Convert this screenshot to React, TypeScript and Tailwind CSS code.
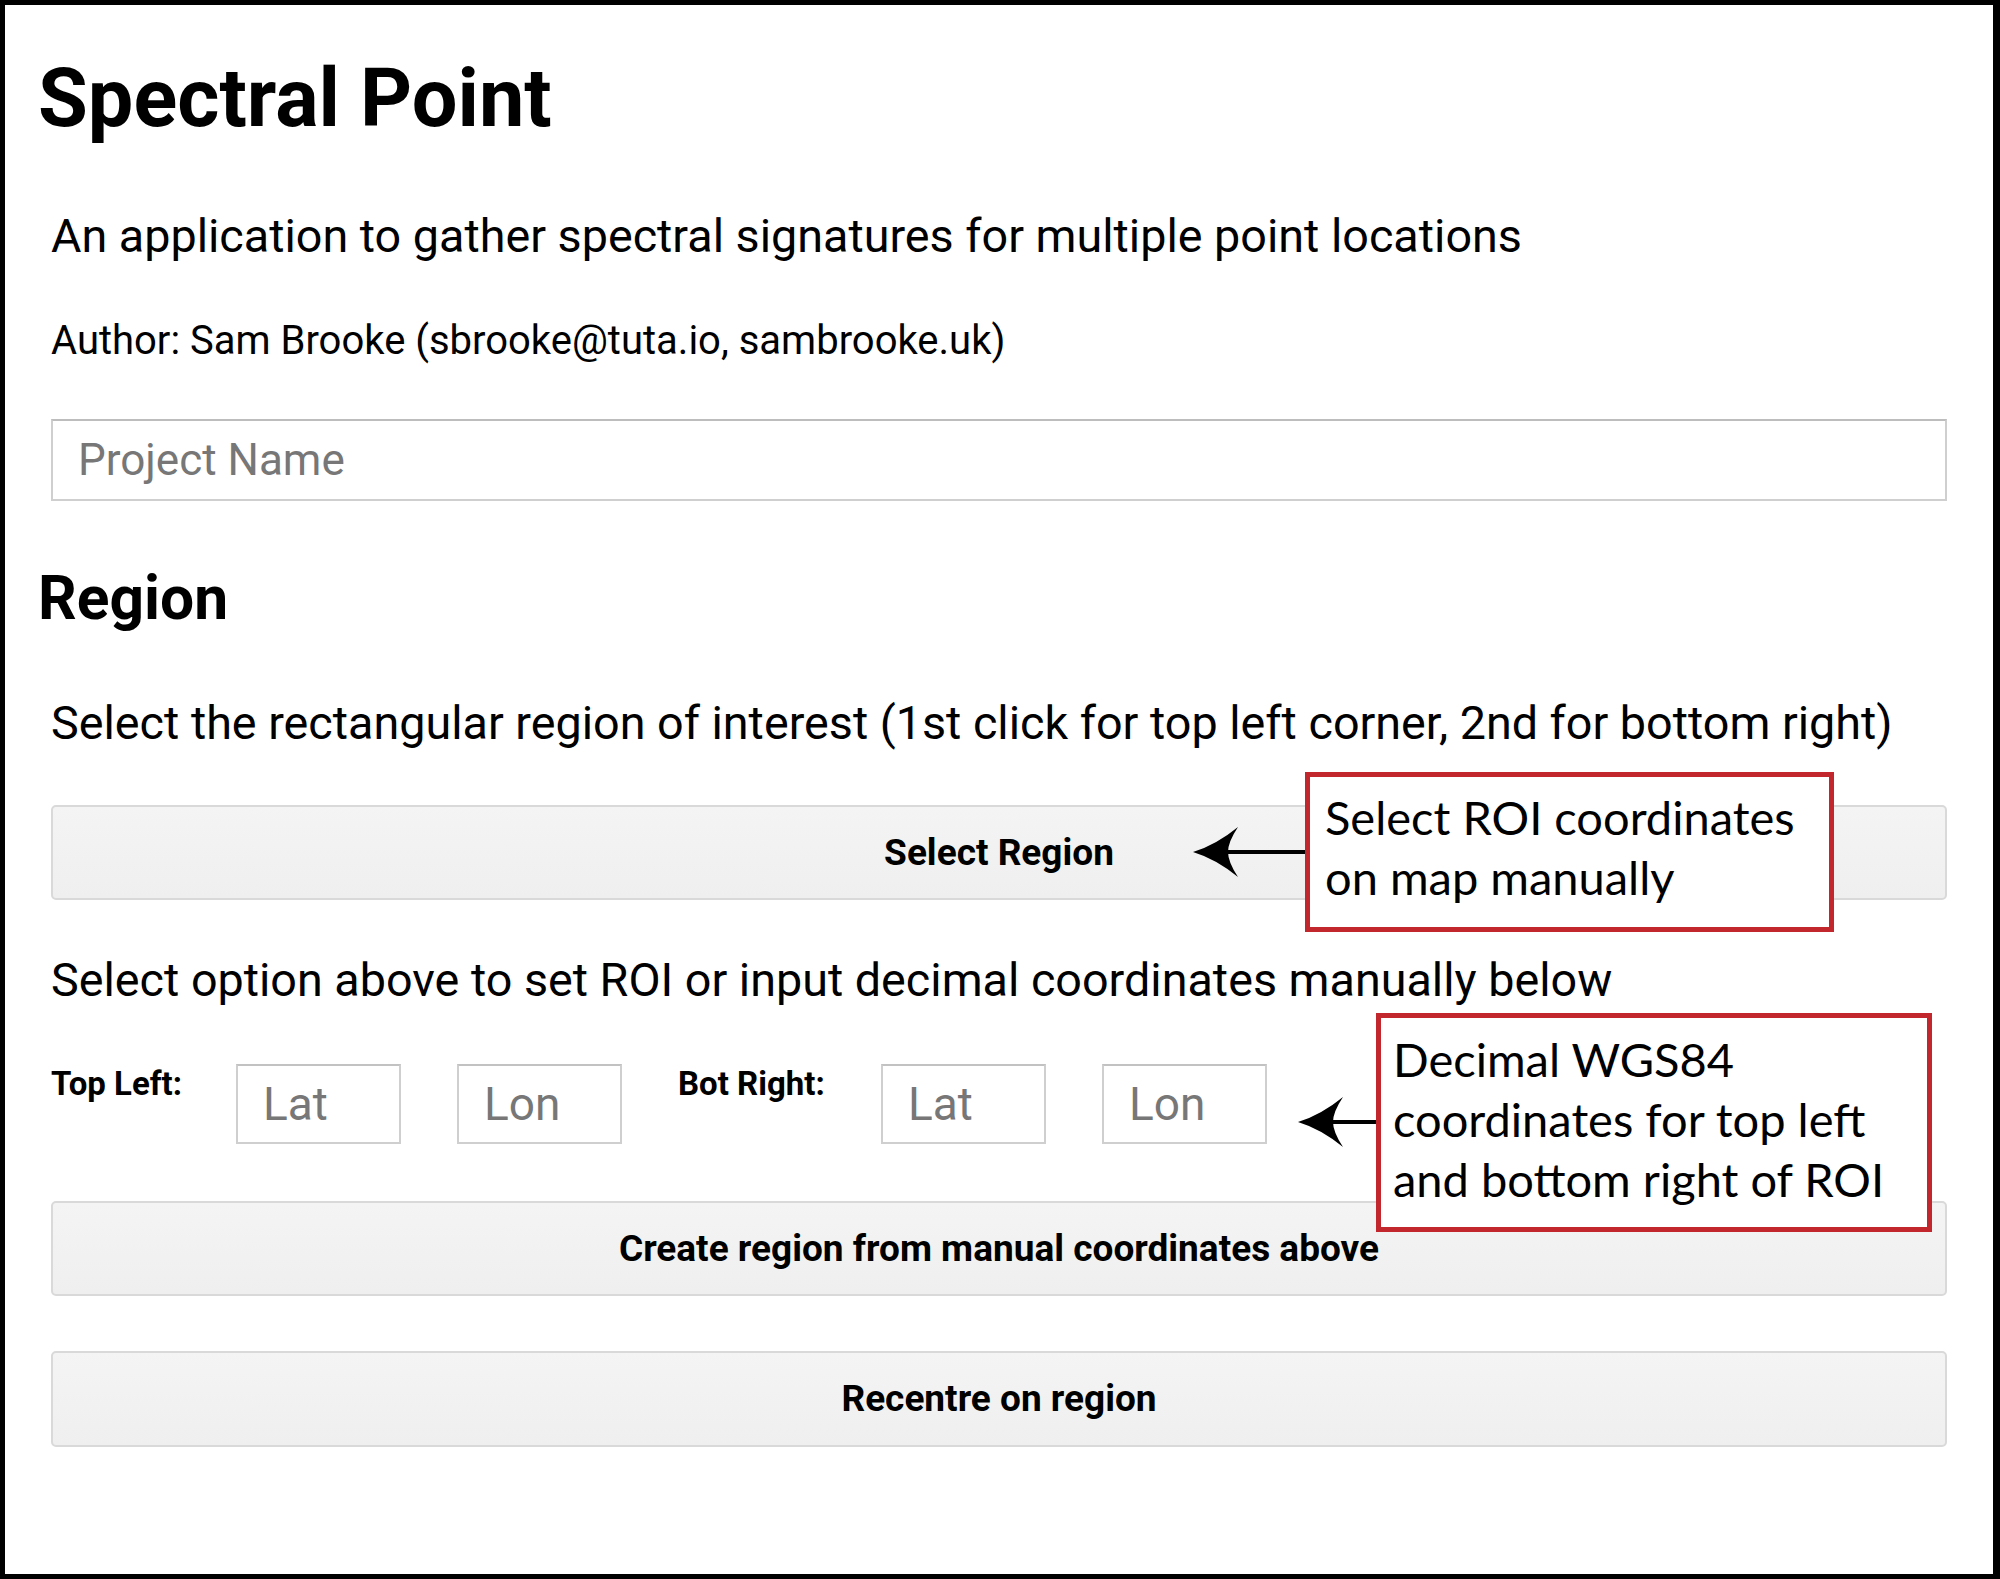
import * as React from "react";

function Arrow({ className, length }: { className: string; length: number }) {
  // arrow pointing left, tip at x=3, y=30
  return (
    <svg
      className={className}
      width={length + 3}
      height={60}
      viewBox={`0 0 ${length + 3} 60`}
      fill="none"
      xmlns="http://www.w3.org/2000/svg"
    >
      <path d={`M36 30H${length + 3}`} stroke="#000" strokeWidth="4" />
      <path d="M3 30Q26 23 48 5Q38 20 38 30Q38 40 48 55Q26 37 3 30Z" fill="#000" />
    </svg>
  );
}

function CoordInput({ placeholder, className = "" }: { placeholder: string; className?: string }) {
  return (
    <input
      placeholder={placeholder}
      className={`w-[165px] h-[80px] shrink-0 border-2 border-[#cfcfcf] border-t-[#c2c2c2] bg-white pl-[25px] text-[46px] text-black placeholder:text-[#777777] outline-none ${className}`}
    />
  );
}

function PanelButton({ label, className = "" }: { label: string; className?: string }) {
  return (
    <button
      className={`mx-[13px] flex h-[95px] items-center justify-center rounded-[5px] border-2 border-[#d9d9d9] bg-gradient-to-b from-[#f4f4f4] to-[#efefef] text-[37px] font-bold text-black ${className}`}
    >
      {label}
    </button>
  );
}

export default function App() {
  return (
    <div className="relative h-[1579px] w-[2000px] border-[5px] border-r-[7px] border-black bg-white font-['Roboto',sans-serif] text-black">
      <div className="flex flex-col px-[33px]">
        <h1 className="mt-[53px] text-[81px] font-bold leading-[82px] text-black">Spectral Point</h1>
        <p className="ml-[13px] mt-[68px] text-[46.7px] leading-[56px]">
          An application to gather spectral signatures for multiple point locations
        </p>
        <p className="ml-[13px] mt-[53px] text-[40px] leading-[48px]">
          Author: Sam Brooke (sbrooke@tuta.io, sambrooke.uk)
        </p>
        <input
          placeholder="Project Name"
          className="mx-[13px] mt-[54px] h-[82px] border-2 border-[#cfcfcf] border-t-[#bdbdbd] bg-white pl-[25px] text-[44px] text-black placeholder:text-[#777777] outline-none"
        />
        <h2 className="mt-[66px] text-[60.5px] font-bold leading-[64px] text-black">Region</h2>
        <p className="ml-[13px] mt-[64px] text-[46.7px] leading-[56px]">
          Select the rectangular region of interest (1st click for top left corner, 2nd for bottom right)
        </p>
        <PanelButton label="Select Region" className="mt-[54px]" />
        <p className="ml-[13px] mt-[52px] text-[46.7px] leading-[56px]">
          Select option above to set ROI or input decimal coordinates manually below
        </p>
        <div className="ml-[13px] mt-[56px] flex items-start">
          <span className="w-[185px] shrink-0 text-[33px] font-bold leading-[40px] text-black">Top Left:</span>
          <CoordInput placeholder="Lat" />
          <CoordInput placeholder="Lon" className="ml-[56px]" />
          <span className="ml-[56px] w-[203px] shrink-0 text-[33px] font-bold leading-[40px] text-black">Bot Right:</span>
          <CoordInput placeholder="Lat" />
          <CoordInput placeholder="Lon" className="ml-[56px]" />
        </div>
        <PanelButton label="Create region from manual coordinates above" className="mt-[57px]" />
        <PanelButton label="Recentre on region" className="mt-[55px] h-[96px]" />
      </div>

      {/* annotations drawn over the panel */}
      <Arrow className="absolute left-[1185px] top-[817px]" length={120} />
      <div className="absolute left-[1300px] top-[767px] h-[160px] w-[529px] border-[5px] border-[#c1272d] bg-white pl-[15px] pt-[10px] font-['Lato',sans-serif] text-[47px] leading-[60px] text-black">
        <div>Select ROI coordinates</div>
        <div>on map manually</div>
      </div>

      <Arrow className="absolute left-[1290px] top-[1087px]" length={84} />
      <div className="absolute left-[1371px] top-[1008px] h-[219px] w-[556px] border-[5px] border-[#c1272d] bg-white pl-[12px] pt-[11px] font-['Lato',sans-serif] text-[47px] leading-[60px] text-black">
        <div>Decimal WGS84</div>
        <div>coordinates for top left</div>
        <div>and bottom right of ROI</div>
      </div>
    </div>
  );
}
